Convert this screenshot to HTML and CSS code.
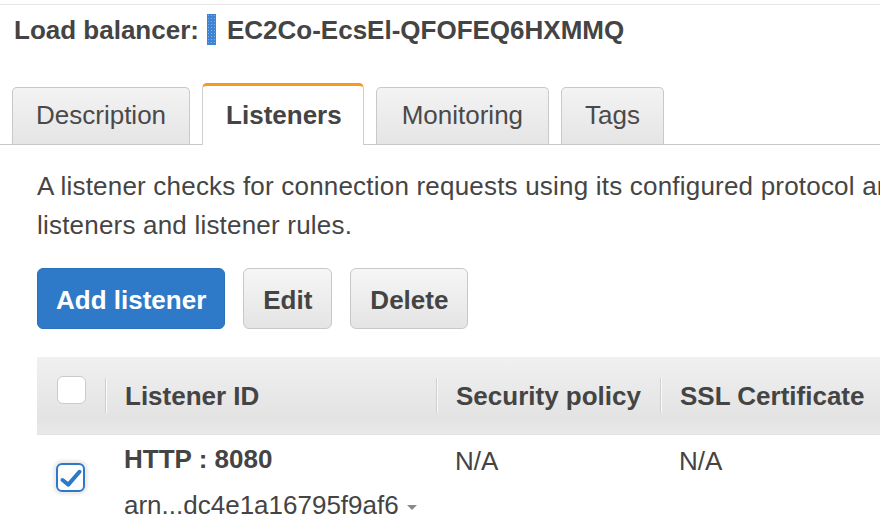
FILE: index.html
```html
<!DOCTYPE html>
<html lang="en">
<head>
<meta charset="utf-8">
<title>Load balancer listeners</title>
<link rel="stylesheet" href="styles.css">
</head>
<body>
<div class="page">
  <div class="topline"></div>
  <h1 class="lb-title"><span>Load balancer:</span><span class="cursor"></span><span>EC2Co-EcsEl-QFOFEQ6HXMMQ</span></h1>

  <div class="tabs">
    <div class="tab">Description</div>
    <div class="tab active">Listeners</div>
    <div class="tab wide">Monitoring</div>
    <div class="tab">Tags</div>
  </div>

  <p class="intro">A listener checks for connection requests using its configured protocol and port. You can add, remove, or update<br>listeners and listener rules.</p>

  <div class="actions">
    <button class="btn primary">Add listener</button>
    <button class="btn">Edit</button>
    <button class="btn">Delete</button>
  </div>

  <div class="table">
    <div class="thead">
      <div class="th check"><span class="box"></span></div>
      <div class="th"><span class="sep"></span>Listener ID</div>
      <div class="th"><span class="sep"></span>Security policy</div>
      <div class="th"><span class="sep"></span>SSL Certificate</div>
    </div>
    <div class="trow">
      <div class="td check">
        <span class="box checked">
          <svg width="25" height="25" viewBox="0 0 25 25"><path d="M4.5 15 L10.3 19.6 L21.5 6.8" fill="none" stroke="#2e78c6" stroke-width="4" stroke-linecap="round" stroke-linejoin="round"/></svg>
        </span>
      </div>
      <div class="td">
        <div class="strong">HTTP : 8080</div>
        <div class="arn">arn...dc4e1a16795f9af6<span class="caret"></span></div>
      </div>
      <div class="td na">N/A</div>
      <div class="td na">N/A</div>
    </div>
  </div>
</div>
</body>
</html>
```
FILE: styles.css
```css
html, body {
  margin: 0;
  background: #fff;
  overflow: hidden;
}

body {
  font-family: "Liberation Sans", Arial, Helvetica, sans-serif;
  color: #444;
}

.page {
  padding-top: 4px;
}

.topline {
  border-top: 1px solid #e6e6e6;
}

.lb-title {
  display: flex;
  align-items: center;
  margin: 9px 0 0 14px;
  font-size: 26px;
  line-height: 30px;
  font-weight: bold;
  color: #444;
}

.cursor {
  width: 9px;
  height: 31px;
  margin: 0 11px 0 8px;
  background-color: #3d84d6;
  background-image: radial-gradient(circle, rgba(255, 255, 255, 0.35) 0.6px, transparent 0.8px);
  background-size: 3px 3px;
}

.tabs {
  display: flex;
  align-items: flex-end;
  gap: 12px;
  padding-left: 12px;
  margin-top: 38px;
  border-bottom: 1px solid #c9c9c9;
}

.tab {
  box-sizing: border-box;
  height: 57px;
  padding: 12px 23px 0;
  border: 1px solid #c9c9c9;
  border-bottom: 0;
  border-radius: 5px 5px 0 0;
  background: linear-gradient(#f3f3f3, #e5e5e5);
  font-size: 26px;
  line-height: 30px;
  color: #4a4a4a;
}

.tab.wide {
  padding: 12px 25px 0;
}

.tab.active {
  height: 62px;
  margin-bottom: -1px;
  padding-top: 14px;
  padding-right: 21px;
  border-color: #cfcfcf;
  border-top: 3px solid #f7981f;
  background: #fff;
  font-weight: bold;
  color: #444;
}

.intro {
  margin: 22px 0 0 37px;
  font-size: 26px;
  line-height: 39px;
  letter-spacing: 0.2px;
  white-space: nowrap;
  color: #454545;
}

.actions {
  display: flex;
  gap: 18px;
  margin: 23px 0 0 37px;
}

.btn {
  box-sizing: border-box;
  display: flex;
  align-items: center;
  height: 61px;
  padding: 2px 19px 0;
  border: 1px solid #c8c8c8;
  border-radius: 6px;
  background: linear-gradient(#f6f6f6, #e4e4e4);
  font-family: inherit;
  font-size: 26px;
  line-height: 30px;
  font-weight: bold;
  color: #444;
}

.btn.primary {
  padding: 2px 18px 0;
  background: #2f7ac8;
  border-color: #2b70ba;
  color: #fff;
}

.table {
  margin: 28px 0 0 37px;
}

.thead,
.trow {
  display: grid;
  grid-template-columns: 68px 331px 224px 1fr;
}

.thead {
  height: 77px;
  background: linear-gradient(#f0f0f0, #e3e3e3 80%, #e9e9e9);
  border-bottom: 1px solid #e2e2e2;
}

.th {
  display: flex;
  align-items: center;
  font-size: 26px;
  line-height: 30px;
  font-weight: bold;
  color: #444;
  white-space: nowrap;
}

.th.check {
  padding-left: 20px;
}

.sep {
  width: 1px;
  height: 35px;
  margin-right: 19px;
  background: #cfcfcf;
  box-shadow: 1px 0 0 #fafafa;
}

.box {
  box-sizing: border-box;
  display: block;
  width: 29px;
  height: 28px;
  border: 1px solid #cacaca;
  border-radius: 6px;
  background: #fff;
}

.th .box {
  margin-bottom: 11px;
}

.box.checked {
  height: 29px;
  border: 2px solid #2f78c5;
  border-radius: 6px;
  box-shadow: 0 0 3px 3px #ececec;
  display: flex;
  align-items: center;
  justify-content: center;
}

.td {
  padding: 9px 0 0 19px;
  font-size: 26px;
  line-height: 30px;
  color: #444;
  white-space: nowrap;
}

.td.check {
  padding: 28px 0 0 19px;
}

.td.na {
  padding-top: 11px;
}

.strong {
  font-weight: bold;
}

.arn {
  margin-top: 16px;
}

.caret {
  display: inline-block;
  margin-left: 8px;
  vertical-align: middle;
  border-left: 5px solid transparent;
  border-right: 5px solid transparent;
  border-top: 5px solid #8a8a8a;
}
```
